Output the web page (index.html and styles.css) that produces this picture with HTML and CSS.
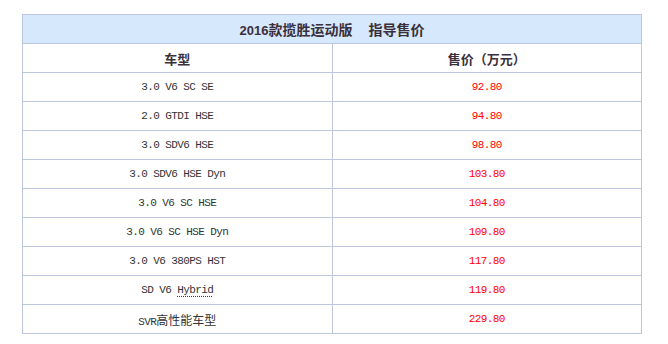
FILE: index.html
```html
<!DOCTYPE html>
<html lang="zh-CN">
<head>
<meta charset="utf-8">
<title>2016款揽胜运动版 指导售价</title>
<link rel="stylesheet" href="styles.css">
</head>
<body>
<table class="price-table">
  <thead>
    <tr class="title-row"><th colspan="2"><span class="num">2016</span>款揽胜运动版<span class="gap"></span>指导售价</th></tr>
    <tr class="head-row"><th class="col-a">车型</th><th class="col-b">售价（万元）</th></tr>
  </thead>
  <tbody>
    <tr><td class="model">3.0 V6 SC SE</td><td class="price">92.80</td></tr>
    <tr><td class="model">2.0 GTDI HSE</td><td class="price">94.80</td></tr>
    <tr><td class="model">3.0 SDV6 HSE</td><td class="price">98.80</td></tr>
    <tr><td class="model">3.0 SDV6 HSE Dyn</td><td class="price">103.80</td></tr>
    <tr><td class="model">3.0 V6 SC HSE</td><td class="price">104.80</td></tr>
    <tr><td class="model">3.0 V6 SC HSE Dyn</td><td class="price">109.80</td></tr>
    <tr><td class="model">3.0 V6 380PS HST</td><td class="price">117.80</td></tr>
    <tr><td class="model">SD V6 <span class="link">Hybrid</span></td><td class="price">119.80</td></tr>
    <tr><td class="model">SVR<span class="cjk">高性能车型</span></td><td class="price">229.80</td></tr>
  </tbody>
</table>
</body>
</html>
```
FILE: styles.css
```css
html, body { background: #fff; }
body {
  margin: 14px 0 0 22px;
  font-family: "Noto Sans CJK SC", "Liberation Sans", sans-serif;
}
.price-table {
  border-collapse: collapse;
  width: 620px;
  table-layout: fixed;
}
.price-table th, .price-table td {
  border: 1px solid #bcc6de;
  height: 28px;
  padding: 0;
  text-align: center;
  vertical-align: middle;
}
.col-a { width: 309px; }
.col-b { width: 310px; }
.title-row th {
  background: #d6e8fb;
  font-size: 14px;
  font-weight: bold;
  color: #3a2f3a;
}
.title-row .num { font-family: "Liberation Sans", sans-serif; font-size: 13px; }
.title-row .gap { display: inline-block; width: 16px; }
.head-row th {
  font-size: 13px;
  font-weight: bold;
  color: #3a2f3a;
}
.model {
  font-family: "Liberation Mono", monospace;
  font-size: 11px;
  letter-spacing: -0.6px;
  color: #333;
}
.price {
  font-family: "Liberation Mono", monospace;
  font-size: 11px;
  letter-spacing: -0.6px;
  color: #ff0000;
}
.link {
  text-decoration: underline dotted #2a3a9a;
  text-underline-offset: 3px;
}
.cjk {
  font-family: "Noto Sans CJK SC", sans-serif;
  font-size: 12px;
  letter-spacing: 0;
}
```
